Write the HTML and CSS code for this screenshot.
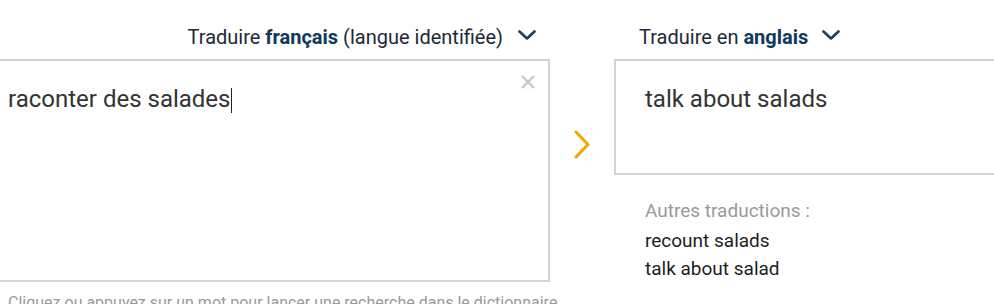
FILE: index.html
```html
<!DOCTYPE html>
<html lang="fr">
<head>
  <meta charset="UTF-8" />
  <meta name="viewport" content="width=device-width, initial-scale=1.0"/>
  <title>Traducteur</title>
  <link rel="stylesheet" href="styles.css">
</head>
<body>

  <div class="translator">
    <div class="col source">
      <div class="lang-bar">
        <span>Traduire <b>français</b> (langue identifiée)</span>
        <svg class="caret" width="18" height="10" viewBox="0 0 18 10"><polyline points="1.5,1.5 9,8.5 16.5,1.5" /></svg>
      </div>
      <div class="box source-box">
        <div class="text">raconter des salades<span class="cursor"></span></div>
        <svg class="clear" width="14" height="14" viewBox="0 0 14 14"><path d="M1 1 L13 13 M13 1 L1 13" /></svg>
      </div>
      <p class="hint">Cliquez ou appuyez sur un mot pour lancer une recherche dans le dictionnaire.</p>
    </div>

    <div class="swap">
      <svg width="18" height="30" viewBox="0 0 18 30"><polyline points="3,2 15,14.5 3,27" /></svg>
    </div>

    <div class="col target">
      <div class="lang-bar">
        <span>Traduire en <b>anglais</b></span>
        <svg class="caret" width="18" height="10" viewBox="0 0 18 10"><polyline points="1.5,1.5 9,8.5 16.5,1.5" /></svg>
      </div>
      <div class="box target-box">
        <div class="text">talk about salads</div>
      </div>
      <div class="others">
        <div class="others-title">Autres traductions :</div>
        <div>recount salads</div>
        <div>talk about salad</div>
      </div>
    </div>
  </div>

</body>
</html>
```

FILE: styles.css
```css
* {
  box-sizing: border-box;
}
html, body {
  height: 100%;
}
body {
  margin: 0;
  font-family: Roboto, 'Liberation Sans', Arial, sans-serif;
  background: #fff;
  color: #333;
  overflow: hidden;
}
.translator {
  display: flex;
  align-items: flex-start;
  height: 100%;
  overflow: hidden;
}
.col.source {
  width: 570px;
  margin-left: -20px;
}
.col.target {
  flex: 1;
  margin-right: -20px;
}
.lang-bar {
  height: 59px;
  display: flex;
  align-items: center;
  gap: 15px;
  padding-top: 14px;
  font-size: 20px;
  color: #1c2a38;
}
.lang-bar b {
  color: #0f3a5a;
  font-weight: 700;
}
.source .lang-bar {
  justify-content: flex-end;
  padding-right: 14px;
}
.target .lang-bar {
  padding-left: 25px;
  gap: 14px;
}
.caret {
  margin-top: -3px;
}
.caret polyline {
  fill: none;
  stroke: #1d3d5a;
  stroke-width: 2.6;
  stroke-linecap: round;
  stroke-linejoin: round;
}
.box {
  border: 2px solid #d3d3d3;
  position: relative;
}
.source-box {
  height: 223px;
  padding: 23px 0 0 26px;
}
.target-box {
  height: 116px;
  padding: 23px 0 0 29px;
}
.text {
  font-size: 24px;
  line-height: 30px;
  color: #333;
}
.cursor {
  display: inline-block;
  width: 1px;
  height: 25px;
  background: #222;
  vertical-align: -6px;
  margin-left: 1px;
}
.clear {
  position: absolute;
  top: 14px;
  right: 13px;
}
.clear path {
  stroke: #c8c8c8;
  stroke-width: 2.4;
}
.swap {
  width: 64px;
  padding-top: 130px;
  display: flex;
  justify-content: center;
}
.swap polyline {
  fill: none;
  stroke: #f7a400;
  stroke-width: 3;
  stroke-linecap: round;
  stroke-linejoin: round;
}
.others {
  padding: 22px 0 0 31px;
  font-size: 19px;
  line-height: 28px;
  color: #1e1e1e;
}
.others-title {
  color: #9a9a9a;
  margin-bottom: 2px;
}
.hint {
  margin: 11px 0 0 28px;
  font-size: 16px;
  line-height: 20px;
  color: #999;
  white-space: nowrap;
}
```
